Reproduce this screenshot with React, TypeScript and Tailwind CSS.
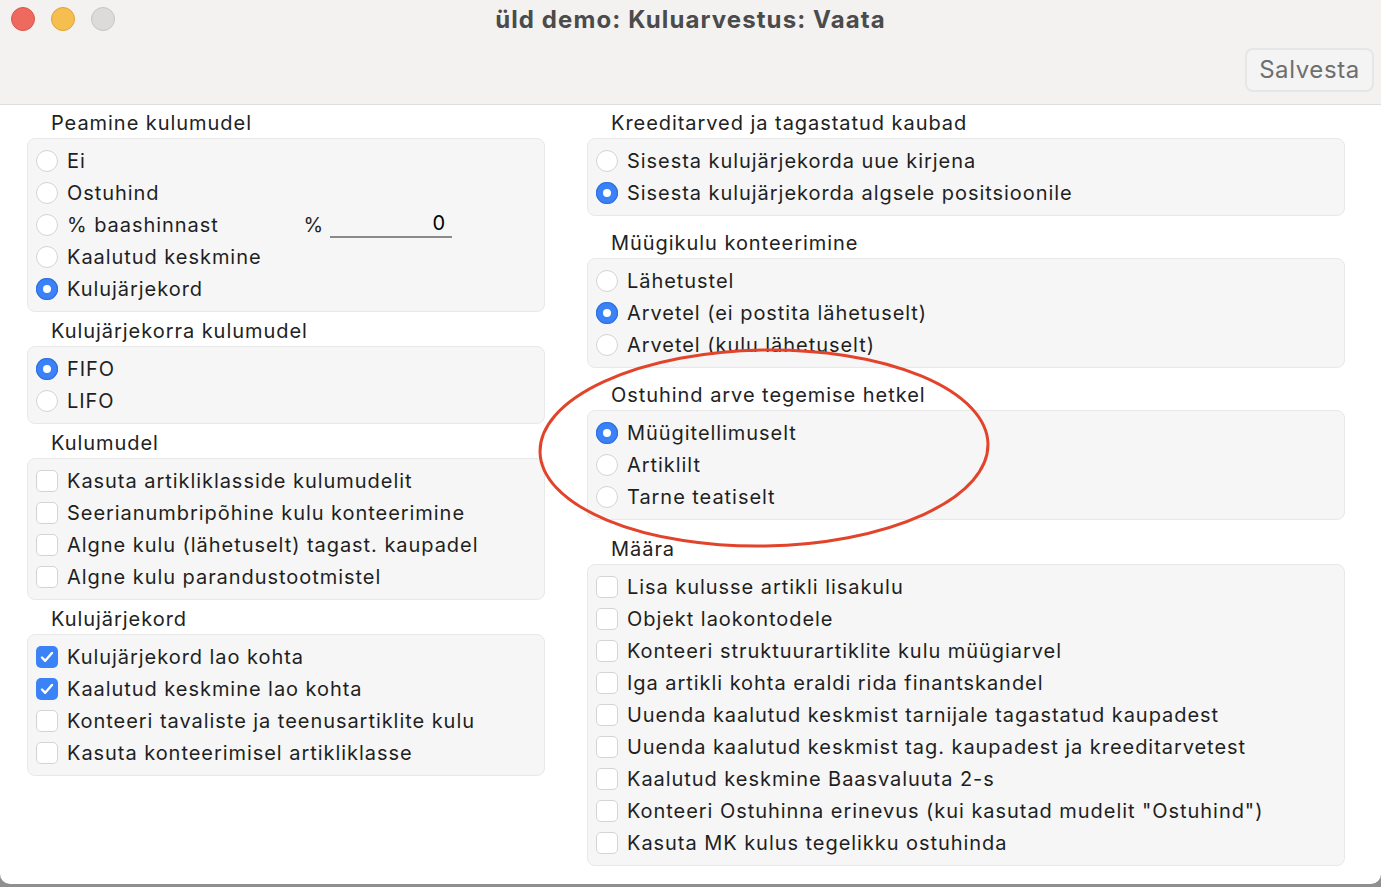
import React from 'react';

type Item = { label: string; on?: boolean };

function Radio({ on }: { on?: boolean }) {
  if (on) {
    return (
      <span className="w-[22px] h-[22px] rounded-full bg-[#3b82f6] flex items-center justify-center shrink-0 shadow-[inset_0_0_0_1px_#2f6fe0]">
        <span className="w-[8px] h-[8px] rounded-full bg-white" />
      </span>
    );
  }
  return <span className="w-[22px] h-[22px] rounded-full bg-white border border-[#d4d4d4] shrink-0" />;
}

function Check({ on }: { on?: boolean }) {
  if (on) {
    return (
      <span className="w-[22px] h-[22px] rounded-[5px] bg-[#3b82f6] flex items-center justify-center shrink-0">
        <svg width="16" height="16" viewBox="0 0 16 16" fill="none">
          <path d="M3 8.5l3.2 3.3L13 4" stroke="white" strokeWidth="2.4" strokeLinecap="round" strokeLinejoin="round" />
        </svg>
      </span>
    );
  }
  return <span className="w-[22px] h-[22px] rounded-[5px] bg-white border border-[#d4d4d4] shrink-0" />;
}

function Group({
  title,
  items,
  kind,
  className = '',
  extra,
}: {
  title: string;
  items: Item[];
  kind: 'radio' | 'check';
  className?: string;
  extra?: Record<number, React.ReactNode>;
}) {
  return (
    <div className={className}>
      <div className="h-[24px] leading-[24px] pl-[24px] text-[#222]">{title}</div>
      <div className="mt-[3px] bg-[#f6f6f6] border border-[#e8e8e8] rounded-[8px] py-[6px] px-[8px]">
        {items.map((it, i) => (
          <div key={i} className="h-[32px] flex items-center gap-[9px]">
            {kind === 'radio' ? <Radio on={it.on} /> : <Check on={it.on} />}
            <span className="text-[#1f1f1f] whitespace-nowrap">{it.label}</span>
            {extra?.[i]}
          </div>
        ))}
      </div>
    </div>
  );
}

export default function App() {
  const percentField = (
    <div className="flex items-center ml-auto mr-[84px]">
      <span className="text-[#1f1f1f] mr-[6px]">%</span>
      <span className="w-[122px] border-b-2 border-[#8a8a8a] text-right pr-[6px] leading-[26px] mb-[2px]">0</span>
    </div>
  );

  return (
    <div
      className="w-[1381px] h-[887px] bg-[#8f8f8f] overflow-hidden text-[20px] tracking-[0.95px]"
      style={{ fontFamily: 'Inter, "Noto Sans", sans-serif' }}
    >
      <div className="relative w-full h-[884px] bg-white rounded-b-[10px] overflow-hidden">
        {/* toolbar */}
        <div className="h-[105px] bg-[#f3f2f1] border-b border-[#dedede] relative">
          <div className="absolute left-[11px] top-[7px] flex gap-[16px]">
            <span className="w-[24px] h-[24px] rounded-full bg-[#ee6a5f] border border-[#d9564b]" />
            <span className="w-[24px] h-[24px] rounded-full bg-[#f5be4f] border border-[#dea33a]" />
            <span className="w-[24px] h-[24px] rounded-full bg-[#dcdbda] border border-[#c6c5c4]" />
          </div>
          <div className="pt-[2px] text-center text-[24px] font-bold text-[#4b4b4b] tracking-[1.1px]">
            üld demo: Kuluarvestus: Vaata
          </div>
          <div className="absolute right-[7px] top-[48px] w-[129px] h-[44px] rounded-[8px] border-2 border-[#e6e6e6] bg-[#f4f4f4] flex items-center justify-center text-[24px] tracking-[0.6px] text-[#6e6e6e]">
            Salvesta
          </div>
        </div>

        {/* content */}
        <div className="flex px-[27px] pt-[6px] gap-[42px]">
          <div className="w-[518px] flex flex-col gap-[7px]">
            <Group
              title="Peamine kulumudel"
              kind="radio"
              items={[
                { label: 'Ei' },
                { label: 'Ostuhind' },
                { label: '% baashinnast' },
                { label: 'Kaalutud keskmine' },
                { label: 'Kulujärjekord', on: true },
              ]}
              extra={{ 2: percentField }}
            />
            <Group
              title="Kulujärjekorra kulumudel"
              kind="radio"
              items={[{ label: 'FIFO', on: true }, { label: 'LIFO' }]}
            />
            <Group
              title="Kulumudel"
              kind="check"
              items={[
                { label: 'Kasuta artikliklasside kulumudelit' },
                { label: 'Seerianumbripõhine kulu konteerimine' },
                { label: 'Algne kulu (lähetuselt) tagast. kaupadel' },
                { label: 'Algne kulu parandustootmistel' },
              ]}
            />
            <Group
              title="Kulujärjekord"
              kind="check"
              items={[
                { label: 'Kulujärjekord lao kohta', on: true },
                { label: 'Kaalutud keskmine lao kohta', on: true },
                { label: 'Konteeri tavaliste ja teenusartiklite kulu' },
                { label: 'Kasuta konteerimisel artikliklasse' },
              ]}
            />
          </div>

          <div className="w-[758px] flex flex-col gap-[15px]">
            <Group
              title="Kreeditarved ja tagastatud kaubad"
              kind="radio"
              items={[
                { label: 'Sisesta kulujärjekorda uue kirjena' },
                { label: 'Sisesta kulujärjekorda algsele positsioonile', on: true },
              ]}
            />
            <Group
              title="Müügikulu konteerimine"
              kind="radio"
              items={[
                { label: 'Lähetustel' },
                { label: 'Arvetel (ei postita lähetuselt)', on: true },
                { label: 'Arvetel (kulu lähetuselt)' },
              ]}
            />
            <Group
              title="Ostuhind arve tegemise hetkel"
              kind="radio"
              items={[
                { label: 'Müügitellimuselt', on: true },
                { label: 'Artiklilt' },
                { label: 'Tarne teatiselt' },
              ]}
            />
            <Group
              title="Määra"
              kind="check"
              className="mt-[2px]"
              items={[
                { label: 'Lisa kulusse artikli lisakulu' },
                { label: 'Objekt laokontodele' },
                { label: 'Konteeri struktuurartiklite kulu müügiarvel' },
                { label: 'Iga artikli kohta eraldi rida finantskandel' },
                { label: 'Uuenda kaalutud keskmist tarnijale tagastatud kaupadest' },
                { label: 'Uuenda kaalutud keskmist tag. kaupadest ja kreeditarvetest' },
                { label: 'Kaalutud keskmine Baasvaluuta 2-s' },
                { label: 'Konteeri Ostuhinna erinevus (kui kasutad mudelit "Ostuhind")' },
                { label: 'Kasuta MK kulus tegelikku ostuhinda' },
              ]}
            />
          </div>
        </div>

        {/* red annotation ellipse */}
        <svg className="absolute left-[530px] top-[345px] pointer-events-none" width="470" height="210" viewBox="0 0 470 210">
          <ellipse cx="234" cy="103" rx="224" ry="98" fill="none" stroke="#e2432b" strokeWidth="3" transform="rotate(-1 234 103)" />
        </svg>
      </div>
    </div>
  );
}
